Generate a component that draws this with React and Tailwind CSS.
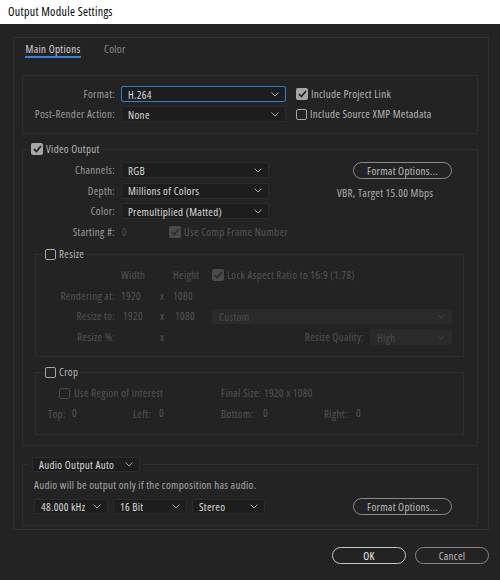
import React from "react";

function Chevron({ dim }) {
  return (
    <svg width="8" height="5" viewBox="0 0 8 5" className="shrink-0">
      <path d="M0.5 0.5 L4 4 L7.5 0.5" fill="none" stroke={dim ? "#474747" : "#a8a8a8"} strokeWidth="1" />
    </svg>
  );
}

function Select({ value, w, h = "h-4", focused, disabled, className = "" }) {
  const tone = disabled
    ? "bg-[#2a2a2a] border-[#2a2a2a] text-[#4c4c4c]"
    : focused
    ? "bg-[#1d1d1d] border-[#2d7fd6] text-[#dcdcdc]"
    : "bg-[#1d1d1d] border-[#2c2c2c] text-[#dcdcdc]";
  return (
    <div className={`${w} ${h} ${tone} ${className} border rounded-[2px] flex items-center justify-between pl-[6px] pr-[6px] shrink-0`}>
      <span className="leading-none">{value}</span>
      <Chevron dim={disabled} />
    </div>
  );
}

function Check({ checked, disabled, className = "" }) {
  if (checked) {
    return (
      <div className={`w-3 h-3 rounded-[2px] flex items-center justify-center shrink-0 ${disabled ? "bg-[#4a4a4a]" : "bg-[#a6a6a6]"} ${className}`}>
        <svg width="9" height="8" viewBox="0 0 9 8">
          <path d="M1 4 L3.4 6.5 L8 1" fill="none" stroke={disabled ? "#2a2a2a" : "#1c1c1c"} strokeWidth="1.6" />
        </svg>
      </div>
    );
  }
  return (
    <div className={`w-[11px] h-[11px] rounded-[2px] border-[1.5px] shrink-0 ${disabled ? "border-[#4a4a4a]" : "border-[#a6a6a6]"} ${className}`} />
  );
}

function PillButton({ children, w, strong, className = "" }) {
  return (
    <div
      className={`${w} h-[17px] rounded-full border-[1.5px] flex items-center justify-center shrink-0 ${
        strong ? "border-[#c9c9c9] text-[#f2f2f2]" : "border-[#8a8a8a] text-[#bdbdbd]"
      } ${className}`}
    >
      {children}
    </div>
  );
}

function Label({ children, w, dim }) {
  return (
    <div className={`${w} text-right shrink-0 ${dim ? "text-[#545454]" : "text-[#9c9c9c]"}`}>{children}</div>
  );
}

export default function App() {
  return (
    <div
      className="w-[500px] h-[580px] bg-[#232323] flex flex-col text-[11px] leading-[14px] tracking-[0.3px] text-[#a8a8a8] whitespace-nowrap font-stretch-[75%]"
      style={{ fontFamily: "'Open Sans', Roboto, sans-serif" }}
    >
      <div className="h-6 bg-white text-black text-[12px] flex items-center pl-2 shrink-0">Output Module Settings</div>

      <div className="ml-[13px] mt-[13px] w-[476px] h-[493px] border border-[#303030] flex flex-col">
        {/* tabs */}
        <div className="flex h-5 pl-[11px] gap-[23px]">
          <div className="flex flex-col w-14 items-center">
            <div className="pt-1 h-[18px] text-[#d6d6d6]">Main Options</div>
            <div className="h-[2px] w-14 bg-[#2d83e0]" />
          </div>
          <div className="pt-1 text-[#8c8c8c]">Color</div>
        </div>

        {/* format */}
        <div className="mt-[17px] ml-2 w-[456px] h-[59px] border border-[#2f2f2f] pt-[10px] flex flex-col gap-1">
          <div className="flex items-center h-4">
            <Label w="w-[92px]">Format:</Label>
            <Select value="H.264" w="w-[165px]" focused className="ml-[6px]" />
            <Check checked className="ml-[10px]" />
            <span className="ml-[3px] text-[#b6b6b6]">Include Project Link</span>
          </div>
          <div className="flex items-center h-4">
            <Label w="w-[92px]">Post-Render Action:</Label>
            <Select value="None" w="w-[165px]" className="ml-[6px]" />
            <Check className="ml-[10px]" />
            <span className="ml-[3px] text-[#b6b6b6]">Include Source XMP Metadata</span>
          </div>
        </div>

        {/* video output */}
        <fieldset className="mt-2 ml-2 w-[456px] h-[304px] border border-[#2f2f2f]">
          <legend className="ml-[6px] px-[2px] flex items-center h-[14px]">
            <Check checked />
            <span className="ml-[3px] text-[#b6b6b6]">Video Output</span>
          </legend>
          <div className="mt-[6px] flex">
            <div className="flex flex-col gap-[4.5px]">
              <div className="flex items-center h-4">
                <Label w="w-[92px]">Channels:</Label>
                <Select value="RGB" w="w-[148px]" className="ml-[6px]" />
              </div>
              <div className="flex items-center h-4">
                <Label w="w-[92px]">Depth:</Label>
                <Select value="Millions of Colors" w="w-[148px]" className="ml-[6px]" />
              </div>
              <div className="flex items-center h-4">
                <Label w="w-[92px]">Color:</Label>
                <Select value="Premultiplied (Matted)" w="w-[148px]" className="ml-[6px]" />
              </div>
            </div>
            <div className="ml-[68px] flex flex-col">
              <PillButton w="w-[99px]" className="ml-4">Format Options...</PillButton>
              <div className="mt-[7px] text-[#b0b0b0]">VBR, Target 15.00 Mbps</div>
            </div>
          </div>
          <div className="mt-[5px] flex items-center h-4">
            <Label w="w-[92px]">Starting #:</Label>
            <span className="ml-[7px] w-[47px] text-[#4c4c4c]">0</span>
            <Check checked disabled />
            <span className="ml-[3px] text-[#565656]">Use Comp Frame Number</span>
          </div>

          {/* resize */}
          <fieldset className="mt-[7px] ml-[12px] w-[429px] h-[110px] border border-[#2f2f2f] text-[#545454]">
            <legend className="ml-[7px] px-[2px] flex items-center h-[14px]">
              <Check />
              <span className="ml-[3px] text-[#b6b6b6]">Resize</span>
            </legend>
            <div className="mt-[6px] flex items-center h-4">
              <div className="w-[85px]" />
              <span className="w-[52px]">Width</span>
              <span className="w-[39px]">Height</span>
              <Check checked disabled />
              <span className="ml-[3px]">Lock Aspect Ratio to 16:9 (1.78)</span>
            </div>
            <div className="mt-[5px] flex items-center h-4">
              <Label w="w-[79px]" dim>Rendering at:</Label>
              <span className="ml-[6px] w-[39px]">1920</span>
              <span className="w-[13px]">x</span>
              <span>1080</span>
            </div>
            <div className="mt-1 flex items-center h-4">
              <Label w="w-[79px]" dim>Resize to:</Label>
              <span className="ml-2 w-[37px]">1920</span>
              <span className="w-[15px]">x</span>
              <span className="w-[37px]">1080</span>
              <Select value="Custom" w="w-[240px]" h="h-[15px]" disabled />
            </div>
            <div className="mt-[5px] flex items-center h-4">
              <Label w="w-[79px]" dim>Resize %:</Label>
              <span className="ml-[45px] w-[13px]">x</span>
              <div className="w-[191px] text-right">Resize Quality:</div>
              <Select value="High" w="w-[82px]" disabled className="ml-[6px]" />
            </div>
          </fieldset>

          {/* crop */}
          <fieldset className="mt-2 ml-[12px] w-[429px] h-[70px] border border-[#2f2f2f] text-[#545454]">
            <legend className="ml-[7px] px-[2px] flex items-center h-[14px]">
              <Check />
              <span className="ml-[3px] text-[#b6b6b6]">Crop</span>
            </legend>
            <div className="mt-[6px] flex items-center h-4">
              <Check disabled className="ml-[23px]" />
              <span className="ml-[4px] w-[147px]">Use Region of Interest</span>
              <span>Final Size: 1920 x 1080</span>
            </div>
            <div className="mt-[5px] flex items-center h-4">
              <span className="ml-[12px] w-[24px]">Top:</span>
              <span className="w-[61px] -mt-[2px]">0</span>
              <span className="w-[26px]">Left:</span>
              <span className="w-[62px] -mt-[2px]">0</span>
              <span className="w-[42px]">Bottom:</span>
              <span className="w-[61px] -mt-[2px]">0</span>
              <span className="w-[32px]">Right:</span>
              <span className="-mt-[2px]">0</span>
            </div>
          </fieldset>
        </fieldset>

        {/* audio */}
        <fieldset className="mt-[11px] ml-2 w-[456px] h-[69px] border border-[#2f2f2f]">
          <legend className="ml-[6px] px-[3px]">
            <Select value="Audio Output Auto" w="w-[108px]" h="h-[15px]" className="border-[#2c2c2c]" />
          </legend>
          <div className="mt-[6px] ml-[11px] text-[#a8a8a8]">Audio will be output only if the composition has audio.</div>
          <div className="mt-[6px] ml-[11px] flex items-center">
            <Select value="48.000 kHz" w="w-[74px]" h="h-[15px]" />
            <Select value="16 Bit" w="w-[74px]" h="h-[15px]" className="ml-[5px]" />
            <Select value="Stereo" w="w-[73px]" h="h-[15px]" className="ml-[5px]" />
            <PillButton w="w-[99px]" className="ml-[88px]">Format Options...</PillButton>
          </div>
        </fieldset>
      </div>

      <div className="mt-[17px] flex justify-end pr-[11px] gap-[9px]">
        <PillButton w="w-[74px]" strong>OK</PillButton>
        <PillButton w="w-[74px]">Cancel</PillButton>
      </div>
    </div>
  );
}
